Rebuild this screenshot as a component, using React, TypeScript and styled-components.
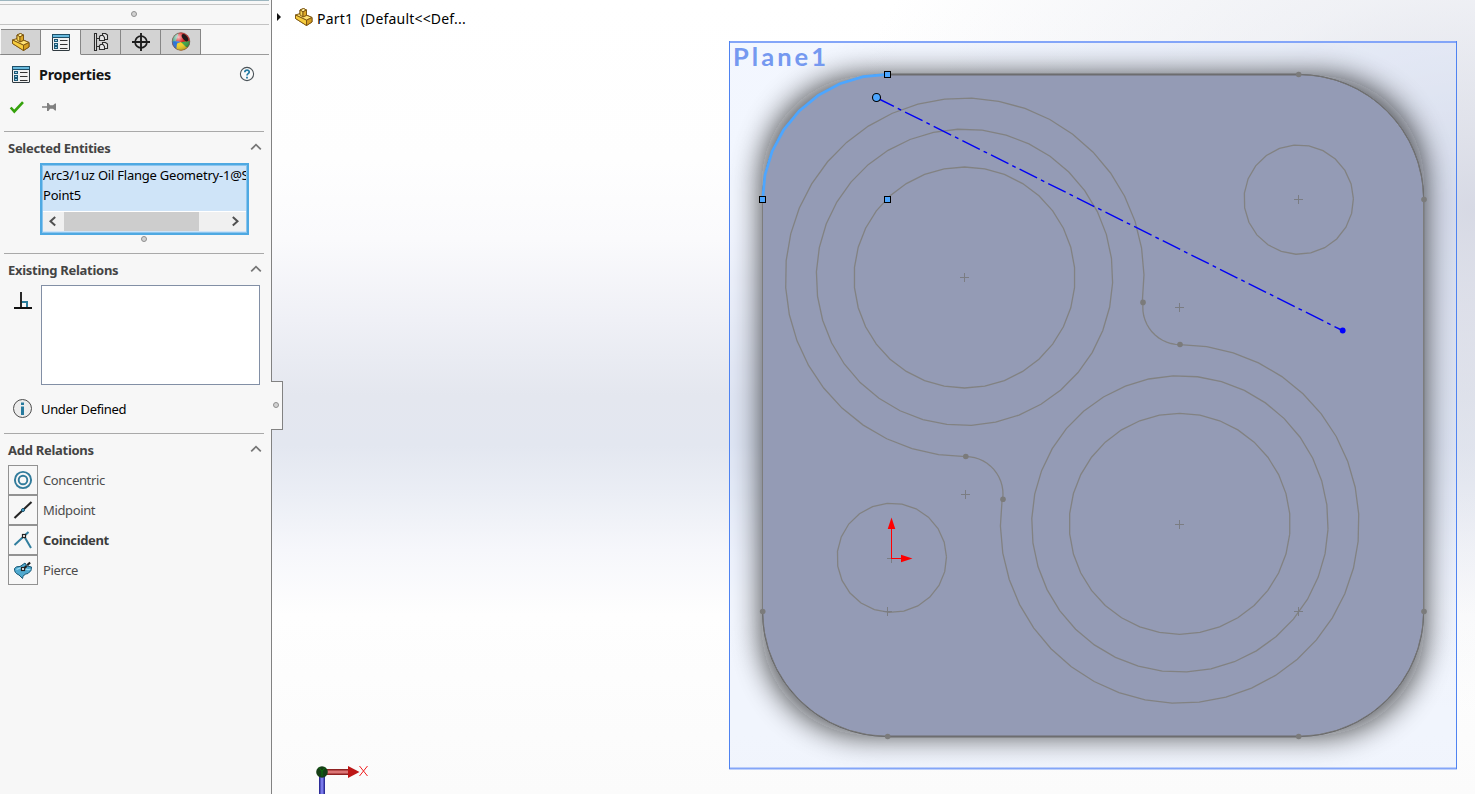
import React from "react";
import styled, { createGlobalStyle } from "styled-components";

const GlobalStyle = createGlobalStyle`
  html, body { margin: 0; padding: 0; overflow: hidden; }
  body { font-family: "Noto Sans", "Open Sans", sans-serif; font-size: 13px; color: #000; }
  svg { display: block; }
`;

const Window = styled.div`
  display: flex;
  width: 1475px;
  height: 794px;
  overflow: hidden;
`;

const Panel = styled.aside`
  position: relative;
  box-sizing: border-box;
  flex: 0 0 272px;
  display: flex;
  flex-direction: column;
  background: #f7f7f7;
  border-right: 1px solid #828282;
`;

const TopStrip = styled.div`
  box-sizing: border-box;
  height: 25px;
  width: 269px;
  border-top: 1px solid #9db6bf;
  border-bottom: 1px solid #c3c3c3;
  display: flex;
  flex-direction: column;
`;

const StripRule = styled.div`
  height: 3px;
  border-bottom: 1px solid #c3c3c3;
`;

const Dot = styled.span`
  box-sizing: border-box;
  width: 6px;
  height: 6px;
  border: 1px solid #8f8f8f;
  border-radius: 50%;
  background: #d2d2d2;
`;

const StripGrip = styled.div`
  flex: 1;
  display: flex;
  align-items: center;
  justify-content: center;
  padding: 0 2px 2px 0;
`;

const Tabs = styled.div`
  display: flex;
  box-sizing: border-box;
  width: 269px;
  height: 26px;
  margin-top: 4px;
  padding-left: 1px;
  box-shadow: inset 0 -1px 0 #9b9b9b;
`;

const Tab = styled.div<{ $active?: boolean }>`
  box-sizing: border-box;
  width: 40px;
  height: 26px;
  display: flex;
  align-items: center;
  justify-content: center;
  background: ${(p) => (p.$active ? "#f7f7f7" : "#d3d3d3")};
  border-top: 1px solid #868686;
  border-right: 1px solid #868686;
  border-bottom: 1px solid ${(p) => (p.$active ? "#f7f7f7" : "#868686")};
`;

const TitleRow = styled.div`
  display: flex;
  align-items: center;
  height: 38px;
  padding: 0 16px 0 11px;
`;

const Title = styled.h1`
  flex: 1;
  margin: 2px 0 0 9px;
  font-size: 14.3px;
  line-height: 20px;
  letter-spacing: -0.2px;
  font-weight: 700;
  color: #151515;
`;

const ActionRow = styled.div`
  display: flex;
  align-items: center;
  gap: 17px;
  height: 28px;
  padding-left: 9px;
  padding-bottom: 10px;
`;

const Section = styled.section<{ $height: number }>`
  box-sizing: border-box;
  height: ${(p) => p.$height}px;
  width: 260px;
  margin-left: 4px;
  border-top: 1px solid #a9a9a9;
`;

const SectionHead = styled.header`
  box-sizing: border-box;
  display: flex;
  align-items: center;
  justify-content: space-between;
  height: 31px;
  padding: 0 2px 2px 4px;
`;

const SectionTitle = styled.h2`
  margin: 3px 0 0;
  font-size: 13px;
  line-height: 18px;
  letter-spacing: -0.28px;
  font-weight: 700;
  color: #444;
`;

const SelectionList = styled.div`
  box-sizing: border-box;
  width: 209px;
  height: 72px;
  margin-left: 36px;
  border: 2px solid #4fa9e2;
  box-shadow: inset 0 0 0 1px #8cc5ee;
  background: #cfe4f8;
  padding: 1px;
  overflow: hidden;
`;

const Entity = styled.div`
  height: 20px;
  line-height: 19px;
  white-space: nowrap;
  overflow: hidden;
  letter-spacing: -0.22px;
`;

const Entities = styled.div`
  height: 45px;
  overflow: hidden;
`;

const ScrollBar = styled.div`
  box-sizing: border-box;
  display: flex;
  align-items: center;
  height: 20px;
  background: #f0f0f0;
  border-top: 1px solid #fff;
`;

const ScrollButton = styled.div<{ $width: number }>`
  box-sizing: border-box;
  width: ${(p) => p.$width}px;
  padding-right: 2px;
  display: flex;
  justify-content: center;
`;

const ScrollThumb = styled.div`
  width: 135px;
  height: 19px;
  background: #cdcdcd;
`;

const ScrollGap = styled.div`
  flex: 1;
`;

const ListGrip = styled.div`
  display: flex;
  justify-content: center;
  padding: 1px 0 0 20px;
`;

const RelationsRow = styled.div`
  display: flex;
  align-items: flex-start;
  gap: 7px;
  padding-left: 9px;
`;

const RelationsBox = styled.div`
  box-sizing: border-box;
  width: 219px;
  height: 100px;
  border: 1px solid #828fa5;
  background: #fff;
`;

const IconInset = styled.div`
  padding-top: 6px;
  width: 21px;
`;

const StatusRow = styled.div`
  display: flex;
  align-items: center;
  gap: 9px;
  height: 48px;
  padding-left: 8px;
  letter-spacing: -0.34px;
`;

const RelationItem = styled.div<{ $strong?: boolean }>`
  display: flex;
  align-items: center;
  gap: 5px;
  height: 30px;
  padding-left: 4px;
  color: ${(p) => (p.$strong ? "#3c3c3c" : "#4c4c4c")};
  font-weight: ${(p) => (p.$strong ? 700 : 400)};
  letter-spacing: -0.36px;
`;

const RelationButton = styled.div`
  box-sizing: border-box;
  width: 30px;
  height: 30px;
  border: 1px solid #929292;
  display: flex;
  align-items: center;
  justify-content: center;
`;

const PanelHandle = styled.div`
  position: absolute;
  box-sizing: border-box;
  left: 271px;
  top: 381px;
  width: 12px;
  height: 49px;
  z-index: 2;
  display: flex;
  align-items: center;
  padding: 0 0 1px 2px;
  background: #f7f7f7;
  border: 1px solid #828282;
  border-left: 0;
`;

const Viewport = styled.main`
  position: relative;
  flex: 1;
  height: 794px;
  background:
    radial-gradient(ellipse 640px 500px at 1203px 210px, rgba(208, 211, 224, 0.85), rgba(219, 222, 232, 0.42) 45%, rgba(255, 255, 255, 0) 100%),
    linear-gradient(180deg, #fff 0, #fefefe 160px, #fafafc 240px, #eff0f6 320px, #e4e7ef 395px, #e3e7f0 445px, #ebeef5 495px, #f6f7fb 550px, #fefefe 615px, #fbfbfb 794px);
`;

const TreeLabel = styled.div`
  position: absolute;
  left: 4px;
  top: 6px;
  display: flex;
  align-items: center;
  gap: 2px;
  height: 22px;
  font-size: 14px;
  white-space: pre;
`;

const TreeText = styled.span`
  margin-top: 3px;
  margin-left: 1px;
  letter-spacing: 0.18px;
`;

const PartIcon = () => (
  <svg width="20" height="20" viewBox="0 0 20 20" stroke="#795313" strokeWidth="0.9" strokeLinejoin="round">
    <path d="M6 3 9.5 1.5 12.5 3V8L18 10.5V15L12.5 18.5 1.5 11.5V8L6 8Z" fill="#f4c63a" />
    <path d="M6 3 9.5 1.5 12.5 3 9 4.8Z" fill="#fff0a0" />
    <path d="M1.5 8 6 6.5 9 9.5 12.8 8.3 18 10.5 12.5 13.2Z" fill="#ffe274" />
    <path d="M6 3 9 4.8V10L6 8Z" fill="#f8d757" />
    <path d="M9 4.8 12.5 3V8.3L9 10Z" fill="#dda827" />
    <path d="M1.5 8 12.5 13.2V18.5L1.5 11.5Z" fill="#f6cc3e" />
    <path d="M12.5 13.2 18 10.5V15L12.5 18.5Z" fill="#d59e22" />
  </svg>
);

const PropertyIcon = () => (
  <svg width="19" height="19" viewBox="0 0 19 19">
    <rect x="1.5" y="1.5" width="17" height="16" rx="0.5" fill="#f1f1f1" stroke="#303a40" />
    <rect x="1" y="1" width="18" height="4" fill="#1f4f68" />
    <rect x="2" y="2" width="16" height="2" fill="#67b9dd" />
    <g fill="#9bd1e7" stroke="#1d5977">
      <rect x="3.5" y="6.5" width="3" height="2" />
      <rect x="3.5" y="10.5" width="3" height="2" />
      <rect x="3.5" y="13.5" width="3" height="2" />
    </g>
    <path d="M9 7.5H16.5M9 11.5H16.5M9 15.5H16.5" stroke="#333" />
  </svg>
);

const TreeIcon = () => (
  <svg width="20" height="20" viewBox="0 0 20 20" fill="#e6e6e6" stroke="#2d2d2d" strokeWidth="1.1">
    <path d="M3.5 1.5V18.5H5.5V1.5ZM5.5 6.5H9M5.5 14.5H9" />
    <path d="M11.5 4V1.5H14.5L16.5 3V7.5H13.5" />
    <path d="M8.5 4.5V8.5H13.5V5.5L12 3.5H9.5Z" />
    <path d="M11.5 12.5V10.5H14.5L16.5 12V16.5H13.5" />
    <path d="M8.5 13.5V17.5H13.5V14.5L12 12.5H9.5Z" />
  </svg>
);

const TargetIcon = () => (
  <svg width="20" height="20" viewBox="0 0 20 20" fill="none" stroke="#1d1d1d">
    <circle cx="10" cy="10" r="5.9" strokeWidth="1.7" />
    <path d="M10 1V19M1 10H19" strokeWidth="1.9" />
  </svg>
);

const AppearanceIcon = () => (
  <svg width="20" height="20" viewBox="0 0 20 20">
    <defs>
      <clipPath id="ball"><circle cx="10" cy="9.5" r="9" /></clipPath>
      <radialGradient id="gloss" cx="0.35" cy="0.25" r="0.8">
        <stop offset="0" stopColor="#fff" stopOpacity="0.75" />
        <stop offset="0.45" stopColor="#fff" stopOpacity="0" />
        <stop offset="1" stopColor="#000" stopOpacity="0.3" />
      </radialGradient>
    </defs>
    <g clipPath="url(#ball)">
      <rect width="20" height="20" fill="#dd1c20" />
      <path d="M0 0H8L5 9 0 12Z" fill="#58ae90" />
      <path d="M0 10Q5 8 10 10L8 20H0Z" fill="#2972d5" />
      <path d="M6 11.5 10 10 17 14 14 20 5 19Z" fill="#f4d022" />
      <path d="M10 10 20 9V15L15 15Z" fill="#39a545" />
    </g>
    <circle cx="10" cy="9.5" r="8.8" fill="url(#gloss)" stroke="#765d50" strokeWidth="0.6" />
    <ellipse cx="14" cy="5.7" rx="2.3" ry="4.3" fill="#1e1818" transform="rotate(-38 14 5.7)" />
  </svg>
);

const HelpIcon = () => (
  <svg width="16" height="16" viewBox="0 0 16 16" fill="none">
    <circle cx="8" cy="8" r="6.6" fill="#fafafa" stroke="#4b5358" strokeWidth="1.1" />
    <path d="M5.8 6.3C5.9 3.2 10.4 3.4 10.2 6.1 10.1 7.7 8 7.6 8 9.5" stroke="#247aa2" strokeWidth="1.7" />
    <path d="M8 10.7V12.4" stroke="#247aa2" strokeWidth="1.8" />
  </svg>
);

const CheckIcon = () => (
  <svg width="16" height="14" viewBox="0 0 16 14" fill="none" stroke="#35a20c" strokeWidth="2.6">
    <path d="M1.7 7.5 5.3 11.5 14 2.2" />
  </svg>
);

const PinIcon = () => (
  <svg width="15" height="10" viewBox="0 0 15 10" fill="#808080">
    <path d="M0 4.3H5V1H6.5L8 3.3H11L13 1.5H14V8.5H13L11 6.7H8L6.5 9H5V5.7H0Z" />
  </svg>
);

const ChevronUp = () => (
  <svg width="12" height="8" viewBox="0 0 12 8" fill="none" stroke="#777" strokeWidth="1.8">
    <path d="M1.2 6.3 6 1.7 10.8 6.3" />
  </svg>
);

const ScrollChevron = ({ right = false }: { right?: boolean }) => (
  <svg width="8" height="11" viewBox="0 0 8 11" fill="none" stroke="#505050" strokeWidth="2">
    <path d={right ? "M1.8 1 6.5 5.2 1.8 9.4" : "M6.2 1 1.5 5.2 6.2 9.4"} />
  </svg>
);

const PerpendicularIcon = () => (
  <svg width="20" height="20" viewBox="0 0 20 20" fill="none">
    <path d="M9 11H14V16" stroke="#2b7d9c" strokeWidth="2" />
    <path d="M8 1V17" stroke="#292929" strokeWidth="2" />
    <path d="M1 17H19" stroke="#111" strokeWidth="2" />
  </svg>
);

const InfoIcon = () => (
  <svg width="20" height="20" viewBox="0 0 20 20">
    <circle cx="10.5" cy="9.5" r="9" fill="#ececec" stroke="#4d4d4d" strokeWidth="1" />
    <path d="M9 3.5H12V6H9ZM9 7.5H12V16H9Z" fill="#267a9e" />
  </svg>
);

const ConcentricIcon = () => (
  <svg width="20" height="20" viewBox="0 0 20 20" fill="none" stroke="#317b9b" strokeWidth="1.9">
    <circle cx="10" cy="10" r="8.1" />
    <circle cx="10" cy="10" r="4.3" />
  </svg>
);

const MidpointIcon = () => (
  <svg width="20" height="20" viewBox="0 0 20 20">
    <path d="M1.5 18 18.5 2" stroke="#252525" strokeWidth="2.1" />
    <circle cx="10" cy="10" r="1.5" fill="#55b3df" stroke="#174e67" />
  </svg>
);

const CoincidentIcon = () => (
  <svg width="20" height="20" viewBox="0 0 20 20" fill="none">
    <path d="M1.5 15 15.5 2M11 6 18 18" stroke="#317e9e" strokeWidth="2" />
    <rect x="9.5" y="4.5" width="3" height="3" fill="#fff" stroke="#222" strokeWidth="1.2" />
  </svg>
);

const PierceIcon = () => (
  <svg width="20" height="20" viewBox="0 0 20 20">
    <path d="M1.5 8.5Q3 6 7 6.5L12 3 14 6 18.5 7Q19 11 15 13.5 10 14 9.5 18.5L6 15Q1 13 1.5 8.5Z" fill="#4fa9cf" stroke="#175673" />
    <path d="M3.5 9.5Q9 6.5 12 8.5T17.5 9" fill="none" stroke="#9cdcf3" strokeWidth="1.3" />
    <path d="M10 9.5 17.5 2" stroke="#222" strokeWidth="2.2" strokeDasharray="5 1 4" />
    <rect x="8.5" y="7.5" width="3" height="3" fill="#fff" stroke="#222" strokeWidth="1.2" />
  </svg>
);

const relations = [
  { name: "Concentric", icon: <ConcentricIcon /> },
  { name: "Midpoint", icon: <MidpointIcon /> },
  { name: "Coincident", icon: <CoincidentIcon />, strong: true },
  { name: "Pierce", icon: <PierceIcon /> },
];

/* Points of a faceted arc; angles are in degrees, clockwise from the x axis. */
const arc = (cx: number, cy: number, r: number, from: number, sweep: number, segments: number) =>
  Array.from({ length: segments + 1 }, (_, i) => {
    const a = ((from + (sweep * i) / segments) * Math.PI) / 180;
    return `${(cx + r * Math.cos(a)).toFixed(2)},${(cy + r * Math.sin(a)).toFixed(2)}`;
  }).join(" ");

const sketchCurves = [
  arc(964.5, 277.5, 110.5, 5.3, 360, 34),
  arc(964.5, 277.3, 148.2, 2.1, 360, 38),
  arc(964.7, 277.3, 179.3, 89.7, 278.2, 32),
  arc(1180, 307.4, 37.2, 188, -98, 14),
  arc(1179.7, 523.8, 110.5, 5.3, 360, 34),
  arc(1179.9, 523.9, 148.2, 2.1, 360, 38),
  arc(1179.7, 523.9, 179.3, -90, 278, 32),
  arc(965.5, 494, 37.5, -90, 98, 14),
  arc(1298.7, 199.6, 54.7, -1, 360, 23),
  arc(891.8, 557.8, 54.7, -1, 360, 23),
];

const corners = [
  arc(1298.7, 199.5, 125, -90, 90, 10),
  arc(1298.7, 611.3, 125, 0, 90, 10),
  arc(887.6, 611.3, 125, 90, 90, 10),
];

const centerMarks = [
  [964.5, 277.5], [1179.5, 307.5], [1298.5, 199.5], [965.5, 494.5],
  [1179.5, 524.5], [887.5, 611.5], [1298.5, 611.5], [891.5, 558.5],
];

const endPoints = [
  [1298.7, 74.5], [1424, 199.5], [1424, 611.5], [1298.7, 736.5], [887.7, 736.5],
  [762.7, 611.5], [1143, 302.4], [1180, 344.5], [965.8, 456.5], [1003, 499.3],
];

const selectedPoints = [[884.5, 71.5], [759.5, 196.5], [884.5, 196.5]];

const Sketch = () => (
  <svg width="1203" height="794" viewBox="272 0 1203 794" fill="none">
    <defs>
      <filter id="soft" x="700" y="0" width="800" height="794" filterUnits="userSpaceOnUse">
        <feGaussianBlur stdDeviation="15" />
      </filter>
      <linearGradient id="shaftX" x1="0" y1="0" x2="0" y2="1">
        <stop offset="0" stopColor="#7c0d0d" />
        <stop offset="0.5" stopColor="#f08a8a" />
        <stop offset="1" stopColor="#7c0d0d" />
      </linearGradient>
      <linearGradient id="shaftZ">
        <stop offset="0" stopColor="#1a1a84" />
        <stop offset="0.5" stopColor="#8d8dff" />
        <stop offset="1" stopColor="#1a1a84" />
      </linearGradient>
      <clipPath id="planeArea"><rect x="729" y="41" width="728" height="728" /></clipPath>
    </defs>
    <rect x="729" y="41" width="728" height="728" fill="#d2e0ff" opacity="0.27" />
    <g clipPath="url(#planeArea)">
      <rect x="762" y="76" width="662" height="659" rx="106" fill="#101010" opacity="0.74" filter="url(#soft)" />
    </g>
    <path d="M729 42H1457M729 768.5H1457" stroke="#83a5f8" strokeWidth="2" />
    <path d="M729.5 41V769M1456.5 41V769" stroke="#4f83f1" />
    <rect x="762.5" y="74.5" width="661.2" height="662" rx="125" fill="#949bb5" stroke="#5c5c5c" strokeWidth="1" />
    <path d="M887 74.5H1299M887 736.5H1299" stroke="#6d6d6f" strokeWidth="2" />
    <path d="M762.5 199V612M1423.5 199V612" stroke="#7d7d7d" />
    {corners.map((points) => <polyline key={points} points={points} stroke="#777" strokeWidth="0.9" />)}
    <g stroke="#828282" strokeWidth="1.3">
      {sketchCurves.map((points) => <polyline key={points} points={points} />)}
    </g>
    {centerMarks.map(([x, y]) => (
      <path key={`${x}-${y}`} d={`M${x - 4.5} ${y}h9M${x} ${y - 4.5}v9`} stroke="#7b7d83" />
    ))}
    {endPoints.map(([x, y]) => <circle key={`${x}-${y}`} cx={x} cy={y} r="2.8" fill="#7b7b7b" />)}
    <polyline points={arc(887.6, 199.3, 125, 180, 90, 8)} stroke="#4da6ff" strokeWidth="2.7" />
    <path d="M877 98 1342.5 330.5" stroke="#0000f5" strokeWidth="1.4" strokeDasharray="19.5 4.3 3.8 4.4" strokeDashoffset="0.6" />
    <circle cx="1342.7" cy="330.5" r="2.9" fill="#00f" />
    <circle cx="876.5" cy="97.5" r="4" fill="#4da6ff" stroke="#000" strokeWidth="1.1" />
    {selectedPoints.map(([x, y]) => (
      <rect key={`${x}-${y}`} x={x} y={y} width="6" height="6" fill="#4da6ff" stroke="#000" />
    ))}
    <path d="M891.5 558.5V526M891 558.5H904" stroke="#f00" />
    <path d="M891.5 517.5 895.3 529H887.7ZM912.5 558.5 901 562.3V554.7Z" fill="#f00" />
    <text x="733" y="66" fill="#7599f0" fontFamily="Lato, sans-serif" fontWeight="700" fontSize="25.5" textLength="93">Plane1</text>
    <rect x="319" y="773" width="6" height="22" fill="url(#shaftZ)" />
    <rect x="326" y="769" width="23" height="6" fill="url(#shaftX)" />
    <path d="M348 766 359.5 772 348 778Z" fill="#bd1616" />
    <circle cx="322" cy="772" r="5.8" fill="#153e16" />
    <path d="M319 767.5 322 771.5 325 767.5M322 771.5V776" stroke="#0b710b" />
    <path d="M359.5 766 367.5 776M367.5 766 359.5 776" stroke="#f12020" />
  </svg>
);

export default function App() {
  return (
    <>
      <GlobalStyle />
      <Window>
        <Panel>
          <TopStrip>
            <StripRule />
            <StripGrip><Dot /></StripGrip>
          </TopStrip>
          <Tabs>
            <Tab><PartIcon /></Tab>
            <Tab $active><PropertyIcon /></Tab>
            <Tab><TreeIcon /></Tab>
            <Tab><TargetIcon /></Tab>
            <Tab><AppearanceIcon /></Tab>
          </Tabs>
          <TitleRow>
            <PropertyIcon />
            <Title>Properties</Title>
            <HelpIcon />
          </TitleRow>
          <ActionRow><CheckIcon /><PinIcon /></ActionRow>
          <Section $height={122}>
            <SectionHead><SectionTitle>Selected Entities</SectionTitle><ChevronUp /></SectionHead>
            <SelectionList>
              <Entities>
                <Entity>Arc3/1uz Oil Flange Geometry-1@S</Entity>
                <Entity>Point5</Entity>
              </Entities>
              <ScrollBar>
                <ScrollButton $width={21}><ScrollChevron /></ScrollButton>
                <ScrollThumb />
                <ScrollGap />
                <ScrollButton $width={21}><ScrollChevron right /></ScrollButton>
              </ScrollBar>
            </SelectionList>
            <ListGrip><Dot /></ListGrip>
          </Section>
          <Section $height={180}>
            <SectionHead><SectionTitle>Existing Relations</SectionTitle><ChevronUp /></SectionHead>
            <RelationsRow>
              <IconInset><PerpendicularIcon /></IconInset>
              <RelationsBox />
            </RelationsRow>
            <StatusRow><InfoIcon />Under Defined</StatusRow>
          </Section>
          <Section $height={160}>
            <SectionHead><SectionTitle>Add Relations</SectionTitle><ChevronUp /></SectionHead>
            {relations.map((r) => (
              <RelationItem key={r.name} $strong={r.strong}>
                <RelationButton>{r.icon}</RelationButton>
                {r.name}
              </RelationItem>
            ))}
          </Section>
          <PanelHandle><Dot /></PanelHandle>
        </Panel>
        <Viewport>
          <Sketch />
          <TreeLabel>
            <svg width="16" height="12" viewBox="0 0 16 12"><path d="M1 2 5 6 1 10Z" fill="#111" /></svg>
            <PartIcon />
            <TreeText>{"Part1  (Default<<Def..."}</TreeText>
          </TreeLabel>
        </Viewport>
      </Window>
    </>
  );
}
